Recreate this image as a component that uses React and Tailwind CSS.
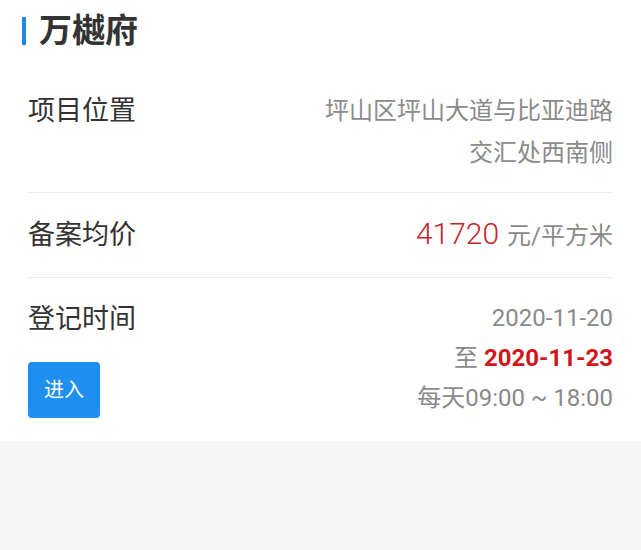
export default function App() {
  const font = { fontFamily: 'Roboto, "Noto Sans CJK SC", "Noto Sans", sans-serif' };
  return (
    <div className="min-h-[550px] w-[641px] bg-[#f5f5f5]" style={font}>
      <div className="bg-white">
        <div className="flex h-[62px] items-center pl-[22px]">
          <div className="h-[28px] w-[4px] bg-[#1e88e5]" />
          <div className="ml-[13px] -mt-[2px] text-[33px] font-bold leading-none text-[#333]">万樾府</div>
        </div>
        <div className="px-[28px]">
          <div className="flex items-start justify-between border-b border-[#ededed] pt-[28px] pb-[18px]">
            <div className="text-[27px] leading-[42px] text-[#333]">项目位置</div>
            <div className="text-right text-[24px] leading-[42px] text-[#8a8a8a]">
              <div>坪山区坪山大道与比亚迪路</div>
              <div>交汇处西南侧</div>
            </div>
          </div>
          <div className="flex items-center justify-between border-b border-[#ededed] pt-[20px] pb-[20px]">
            <div className="text-[27px] leading-[42px] text-[#333]">备案均价</div>
            <div className="flex items-baseline leading-[42px]">
              <span className="text-[30px] font-light text-[#c8242b]">41720</span>
              <span className="ml-[8px] text-[24px] text-[#8a8a8a]">元/平方米</span>
            </div>
          </div>
          <div className="flex items-start justify-between pt-[20px] pb-[23px]">
            <div className="flex flex-col items-start">
              <div className="mt-[1px] text-[27px] leading-[40px] text-[#333]">登记时间</div>
              <button className="mt-[23px] flex h-[56px] w-[72px] items-center justify-center rounded-[4px] bg-[#1f8ff0] text-[20px] text-white">
                进入
              </button>
            </div>
            <div className="text-right text-[24px] leading-[40px] text-[#8a8a8a]">
              <div>2020-11-20</div>
              <div>
                至 <span className="font-bold text-[#d0161b]">2020-11-23</span>
              </div>
              <div>每天09:00 ~ 18:00</div>
            </div>
          </div>
        </div>
      </div>
    </div>
  );
}
